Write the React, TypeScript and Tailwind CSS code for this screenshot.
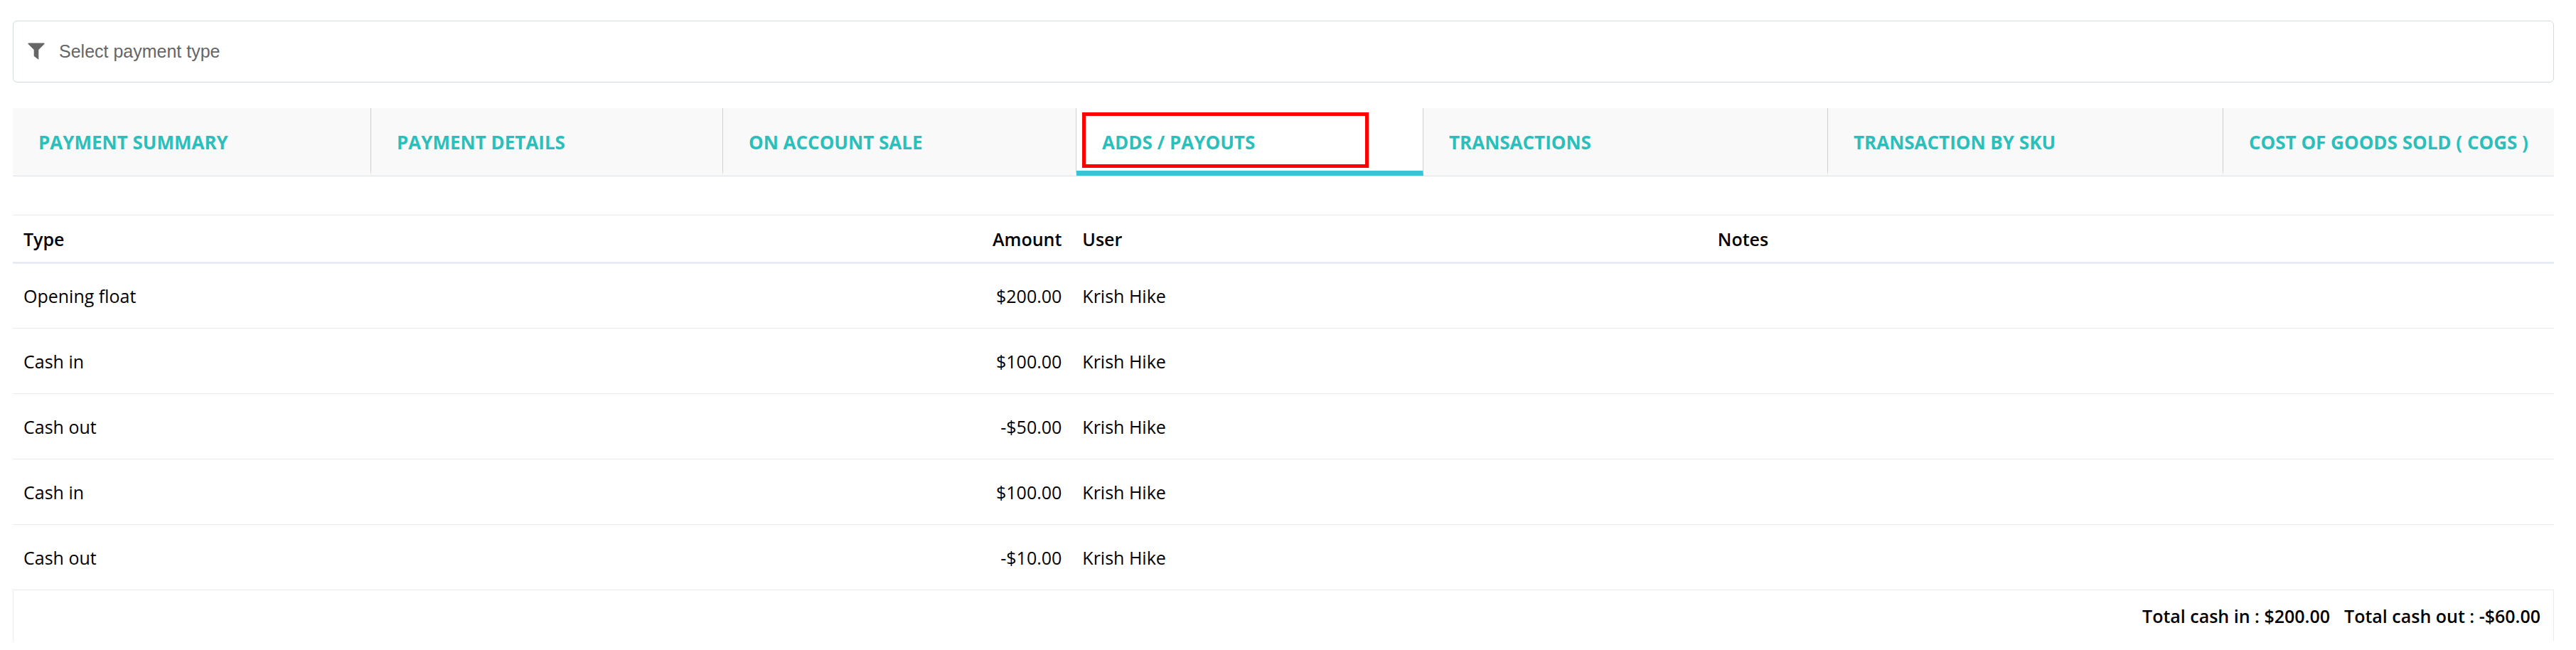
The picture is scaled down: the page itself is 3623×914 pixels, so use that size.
import React, { useState } from "react";

interface Tab {
  label: string;
  size: string;
}

interface Entry {
  type: string;
  amount: string;
  user: string;
  notes?: string;
}

const tabs: Tab[] = [
  { label: "Payment Summary", size: "flex-[467]" },
  { label: "Payment Details", size: "flex-[458]" },
  { label: "On Account Sale", size: "flex-[460]" },
  { label: "Adds / Payouts", size: "flex-[451]" },
  { label: "Transactions", size: "flex-[532]" },
  { label: "Transaction By SKU", size: "flex-[519]" },
  { label: "Cost of Goods Sold ( COGS )", size: "flex-[429]" },
];

const entries: Entry[] = [
  { type: "Opening float", amount: "$200.00", user: "Krish Hike" },
  { type: "Cash in", amount: "$100.00", user: "Krish Hike" },
  { type: "Cash out", amount: "-$50.00", user: "Krish Hike" },
  { type: "Cash in", amount: "$100.00", user: "Krish Hike" },
  { type: "Cash out", amount: "-$10.00", user: "Krish Hike" },
];

const PaymentFilter: React.FC = () => {
  const [query, setQuery] = useState("");

  return (
    <label className="flex h-[87px] items-center gap-5 rounded-md border border-[#cfdddd] px-5 pb-0.5">
      <svg viewBox="0 0 24 24" className="h-6 w-6 shrink-0 fill-[#666666]" aria-hidden="true">
        <path d="M1.2 0.5H22.8C23.6 0.5 23.8 1.3 23.3 1.9L15.3 10V23C15.3 23.5 14.8 23.6 14.4 23.3L9.2 19.2C8.9 19 8.7 18.7 8.7 18.3V10L0.7 1.9C0.2 1.3 0.4 0.5 1.2 0.5Z" />
      </svg>
      <input
        type="text"
        aria-label="Select payment type"
        placeholder="Select payment type"
        value={query}
        onChange={(e) => setQuery(e.target.value)}
        className="min-w-0 flex-1 bg-transparent font-['Liberation_Sans',sans-serif] text-[25px] leading-8 text-[#666666] outline-none placeholder:text-[#666666]"
      />
    </label>
  );
};

const TabBar: React.FC = () => {
  const [active, setActive] = useState(3);

  return (
    <nav className="mt-9 flex h-24 border-b border-[#d8e2ea] text-[26px]">
      {tabs.map((tab, i) => (
        <button
          key={tab.label}
          type="button"
          onClick={() => setActive(i)}
          className={`relative min-w-0 border-b-[7px] border-r border-r-[#d0d0d0] pt-[7px] pl-9 text-left font-bold whitespace-nowrap text-[#2bbfbb] uppercase last:border-r-0 ${tab.size} ${
            i === active ? "border-b-[#36c5d6] bg-white" : "border-b-transparent bg-[#f9f9f9]"
          }`}
        >
          {tab.label}
          {i === 3 && (
            <span className="pointer-events-none absolute top-[6px] left-2 h-[78px] w-[403px] border-5 border-[#ff0000]" />
          )}
        </button>
      ))}
    </nav>
  );
};

const App: React.FC = () => {
  return (
    <main className="bg-white pt-[29px] pr-[31px] pb-3 pl-[18px] font-['Open_Sans',sans-serif] text-[25px] leading-9 text-black">
      <PaymentFilter />
      <TabBar />

      <table className="mt-[54px] w-full table-fixed border-collapse">
        <colgroup>
          <col className="w-[30%]" />
          <col className="w-[11.7%]" />
          <col className="w-[25%]" />
          <col />
        </colgroup>
        <thead>
          <tr className="h-[67px] border-t border-b-3 border-t-[#e9ecee] border-b-[#e6ecf1]">
            <th className="px-[15px] text-left font-semibold">Type</th>
            <th className="px-[15px] text-right font-semibold">Amount</th>
            <th className="px-3.5 text-left font-semibold">User</th>
            <th className="px-3.5 text-left font-semibold">Notes</th>
          </tr>
        </thead>
        <tbody>
          {entries.map((entry, i) => (
            <tr key={i} className="h-[92px] border-b border-[#e8ecef]">
              <td className="px-[15px]">{entry.type}</td>
              <td className="px-[15px] text-right">{entry.amount}</td>
              <td className="px-3.5">{entry.user}</td>
              <td className="px-3.5">{entry.notes}</td>
            </tr>
          ))}
        </tbody>
      </table>

      <div className="flex h-[71px] items-center justify-end gap-5 border-x border-[#e8ecef] px-4.5 font-semibold">
        <span>Total cash in : $200.00</span>
        <span>Total cash out : -$60.00</span>
      </div>
    </main>
  );
};

export default App;
